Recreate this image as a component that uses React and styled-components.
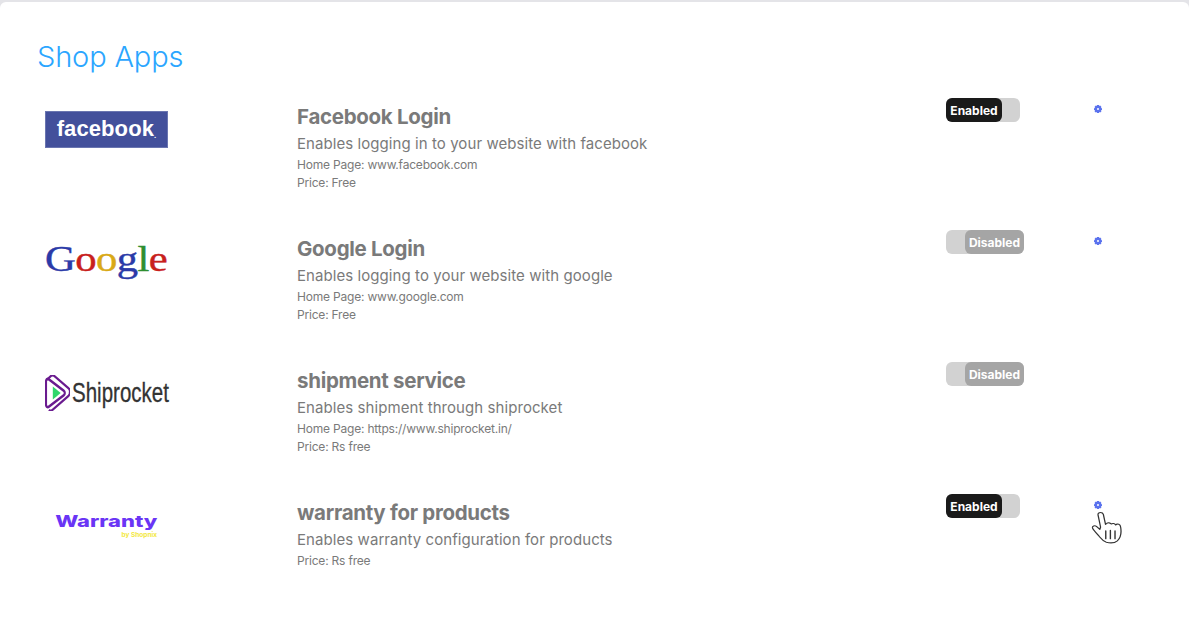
import React from "react";
import styled, { createGlobalStyle } from "styled-components";

const Global = createGlobalStyle`
  html, body { margin: 0; padding: 0; background: #fff; }
  body { font-family: Inter, "Open Sans", sans-serif; overflow: hidden; }
`;
const Page = styled.div`
  width: 1189px; height: 619px; background: #e4e4e8; padding-top: 2px; box-sizing: border-box;
`;
const Card = styled.main`
  background: #fff; height: 617px; border-radius: 6px 6px 0 0; padding: 37px 0 0 37px; box-sizing: border-box;
`;
const Title = styled.h1`
  margin: 0 0 22px; font-size: 29px; line-height: 36px; font-weight: 300; color: #2ba6ff; letter-spacing: -0.15px;
`;
const Row = styled.section`
  display: grid; grid-template-columns: 260px 649px 147px 20px; height: 132px; align-items: start;
`;
const LogoCell = styled.div`
  height: 60px; padding: 2px 0 0 8px; display: flex; align-items: center; box-sizing: content-box;
`;
const Info = styled.div`
  display: flex; flex-direction: column; padding-top: 7px;
`;
const Name = styled.h2`
  margin: 0; font-size: 20.5px; line-height: 26px; font-weight: 700; color: #7a7a7a; letter-spacing: -0.3px;
`;
const Desc = styled.p`
  margin: 0; padding-top: 2px; font-size: 15px; line-height: 24px; color: #7a7a7a; letter-spacing: 0.07px;
`;
const Meta = styled.p`
  margin: 0; font-size: 12px; line-height: 18px; color: #7a7a7a; letter-spacing: -0.2px;
  &:first-of-type { padding-top: 3px; }
`;
const Toggle = styled.div`
  display: flex; justify-content: ${p => (p.$on ? "flex-start" : "flex-end")};
  width: ${p => (p.$on ? 74 : 78)}px; height: 24px; margin-top: 1px;
  background: #d2d2d2; border-radius: 6px;
`;
const Knob = styled.span`
  display: flex; align-items: center; justify-content: center;
  width: ${p => (p.$on ? 56 : 59)}px; height: 24px; border-radius: 6px;
  background: ${p => (p.$on ? "#1a1a1a" : "#a5a5a5")};
  color: #fff; font-size: 12px; font-weight: 700;
`;
const GearCell = styled.div`
  position: relative; height: 24px; display: flex; align-items: center; padding-left: 1px;
`;
const Hand = styled.svg`
  position: absolute; left: -4px; top: 17px; width: 37px; height: 35px;
`;
const FbLogo = styled.div`
  width: 123px; height: 37px; background: #43509b; color: #fff; display: flex; align-items: center; justify-content: center;
  font-family: "Liberation Sans", sans-serif; font-size: 22px; font-weight: 700; letter-spacing: 0.1px;
  box-shadow: inset 0 0 0 1px #6a75b0; padding-bottom: 1px; box-sizing: border-box;
`;
const FbDot = styled.span`
  font-size: 8px; align-self: flex-end; padding-bottom: 7px; line-height: 8px;
`;
const GoogleLogo = styled.div`
  width: 122px; margin-top: -2px; text-align: center; font-family: "Liberation Serif", serif; font-size: 35px; line-height: 36px; letter-spacing: -0.5px;
  font-weight: 400; -webkit-text-stroke: 0.4px currentColor; transform: scaleX(1.22);
`;
const G = styled.span`color: ${p => p.$c};`;
const ShipLogo = styled.div`
  display: flex; align-items: center; width: 124px;
`;
const ShipIcon = styled.svg`
  flex: none; width: 25px; height: 36px;
`;
const ShipText = styled.span`
  flex: none; font-family: "Liberation Sans", sans-serif; font-size: 27px; color: #333; line-height: 36px;
  -webkit-text-stroke: 0.3px currentColor;
  transform: scaleX(0.76); transform-origin: left center; white-space: nowrap; margin-left: 2px;
`;
const WarrantyLogo = styled.div`
  width: 122px; display: flex; flex-direction: column; align-items: center;
`;
const WarrantyName = styled.span`
  font-size: 16px; line-height: 18px; font-weight: 800; color: #6a35f5; transform: scaleX(1.37);
`;
const WarrantyBy = styled.span`
  align-self: flex-end; margin-right: 10px; padding-top: 2px; font-size: 6.5px; line-height: 7px; font-weight: 700; color: #f3e83c;
`;

const Gear = () => (
  <svg width="8" height="8" viewBox="0 0 8 8" aria-hidden="true">
    <path fill="#5a72ee" fillRule="evenodd" d="M3 0h2l.3 1.100.9-.5 1.300 1.300-.6 1L8 3.200v1.700l-1.100.3.6 1-1.300 1.300-1-.6L5 8H3l-.3-1.100-1 .6L.5 6.200l.6-1L0 4.900V3.200l1.100-.3-.6-1L1.800.6l.9.5zM4 3a1 1 0 1 0 0 2 1 1 0 0 0 0-2z" />
  </svg>
);

const HandIcon = () => (
  <Hand viewBox="0 0 32 36" preserveAspectRatio="none" aria-hidden="true">
    <path fill="#fff" stroke="#333" strokeWidth="1.100" strokeLinejoin="round"
      d="M10 2.500c-1.400 0-2.400 1-2.200 2.500l2.200 12.500-.6 2.500-3-3.200c-1.400-1.300-3.800-.2-3.400 1.600.5 2 3.800 6 5.600 8.300 1.900 2.600 3 5.300 6.400 6.500 3.500 1 7.500.5 9.500-1.500 2.200-2.300 3.200-5.500 3.200-9.500 0-3.300-.3-5.800-1.200-7-1.300-1.200-2.800-.7-3.400.2-.6-1.500-2.600-2.100-3.900-1-.9-1.300-2.800-1.600-3.900-.6-.4.2-.8.6-1 1L12.400 4.600C12.100 3.300 11.200 2.500 10 2.500z" />
    <path fill="none" stroke="#333" strokeWidth="1.200" strokeLinecap="round" d="M14.500 21.500v8M18.500 21v8.500M22.500 21.500v8" />
  </Hand>
);

const apps = [
  { name: "Facebook Login", desc: "Enables logging in to your website with facebook", home: "www.facebook.com", price: "Free", on: true, gear: true, logo: <FbLogo>facebook<FbDot>.</FbDot></FbLogo> },
  { name: "Google Login", desc: "Enables logging to your website with google", home: "www.google.com", price: "Free", on: false, gear: true,
    logo: <GoogleLogo><G $c="#2b3aa8">G</G><G $c="#c8201c">o</G><G $c="#d9a916">o</G><G $c="#2b3aa8">g</G><G $c="#2f8f2f">l</G><G $c="#c8201c">e</G></GoogleLogo> },
  { name: "shipment service", desc: "Enables shipment through shiprocket", home: "https://www.shiprocket.in/", price: "Rs free", on: false, gear: false,
    logo: (
      <ShipLogo>
        <ShipIcon viewBox="1 3 25.500 30" preserveAspectRatio="none" aria-hidden="true">
          <path d="M9 12.500l8 5.500-8 5.500z" fill="#2fd66b" />
          <path d="M2 8.500c0-2 1.600-2.700 3-1.800L20 16c1.600 1 1.600 3 0 4L5 29.300c-1.400.9-3 .2-3-1.800z" fill="none" stroke="#6a1b8f" strokeWidth="2.200" strokeLinejoin="round" />
          <path d="M3 7l4.500-3.500c1-.6 1.800-.4 2.800.2L25 14c1.600 1 1.600 3 1 5-.4 1-1 1.500-2 2.200L8 32.500c-1 .6-2 .4-3-.5" fill="none" stroke="#6a1b8f" strokeWidth="2" strokeLinejoin="round" />
        </ShipIcon>
        <ShipText>Shiprocket</ShipText>
      </ShipLogo>
    ) },
  { name: "warranty for products", desc: "Enables warranty configuration for products", price: "Rs free", on: true, gear: true, hand: true,
    logo: <WarrantyLogo><WarrantyName>Warranty</WarrantyName><WarrantyBy>by Shopnix</WarrantyBy></WarrantyLogo> },
];

export default function App() {
  return (
    <Page>
      <Global />
      <Card>
        <Title>Shop Apps</Title>
        {apps.map(a => (
          <Row key={a.name}>
            <LogoCell>{a.logo}</LogoCell>
            <Info>
              <Name>{a.name}</Name>
              <Desc>{a.desc}</Desc>
              {a.home && <Meta>Home Page: {a.home}</Meta>}
              <Meta>Price: {a.price}</Meta>
            </Info>
            <Toggle $on={a.on}><Knob $on={a.on}>{a.on ? "Enabled" : "Disabled"}</Knob></Toggle>
            <GearCell>
              {a.gear && <Gear />}
              {a.hand && <HandIcon />}
            </GearCell>
          </Row>
        ))}
      </Card>
    </Page>
  );
}
